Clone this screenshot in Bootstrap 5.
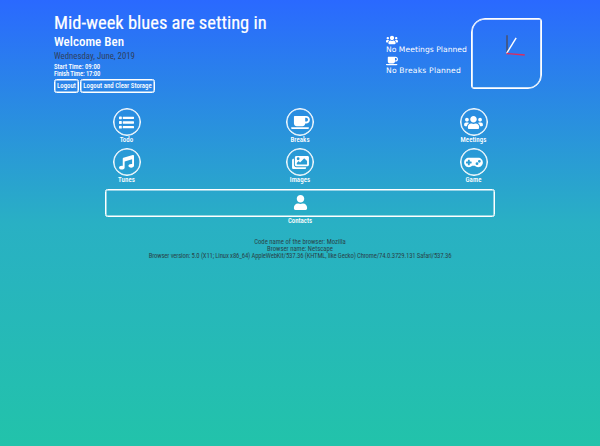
<!DOCTYPE html>
<html lang="en">
<head>
<meta charset="utf-8">
<meta name="viewport" content="width=device-width, initial-scale=1">
<title>Dashboard</title>
<link href="https://cdn.jsdelivr.net/npm/bootstrap@5.3.0/dist/css/bootstrap.min.css" rel="stylesheet">
<style>
body{height:446px;overflow:hidden;background:linear-gradient(180deg,#2a69ff 0%,#29b0c4 50%,#22c3aa 100%);font-family:"Roboto Condensed","Liberation Sans",sans-serif;color:#fff;font-size:6.7px;line-height:7px}
span{white-space:nowrap}
.top{padding:13px 54px 0;height:102px}
.top h1{font-size:18.5px;line-height:20px;font-weight:400;color:#fff;-webkit-text-stroke:.2px #fff}
.top h2{font-size:13px;line-height:18px;font-weight:500;color:#fff}
.day{font-size:8.8px;line-height:11px;color:#2f3f60;margin-bottom:2px}
.times{font-weight:500;font-size:6.7px;line-height:7px}
.finish{letter-spacing:-.16px}
.line-btn{border:1px solid #fff;box-shadow:inset 0 0 0 .5px #fff;border-radius:2.5px;padding:0;height:14px;font-size:6.8px;line-height:11px;color:#fff;font-weight:500;background:none}
.b1{width:25px}.b2{width:75px}
.btn-line{gap:1px;margin-top:1px}
.plans{font-family:"DejaVu Sans",sans-serif;width:81px;font-size:7.6px;line-height:10px;padding-top:22px;letter-spacing:.04px}
.plans svg{display:block;width:12px;height:10px}
.cup-row{margin-top:1px;letter-spacing:.21px}
.clock{width:71px;height:71px;border:1px solid #fff;box-shadow:inset 0 0 0 .8px #fff;border-radius:14px 3px 14px 3px;margin:5px 4px 0}
.clock svg{display:block;width:100%;height:100%;fill:none}
.apps{width:390px;margin:6px auto 0}
.app{width:43px;height:40.3px;font-weight:500;font-size:6.9px;line-height:9px;letter-spacing:.06px}
.ring{width:28px;height:28px;border:1px solid #fff;box-shadow:inset 0 0 0 .5px #fff;border-radius:50%}
.ring svg,.bar svg{width:19px;height:15px}
.bar{height:28px;border:1px solid #fff;box-shadow:inset 0 0 0 .5px #fff;border-radius:2.5px}
.contacts{font-weight:500;font-size:6.8px;line-height:8px}
.foot{padding-top:14px;color:#29444a;font-size:6.7px;line-height:7px}
.agent{letter-spacing:-.145px}
svg{fill:#fff}
</style>
<script src="https://cdn.jsdelivr.net/npm/bootstrap@5.3.0/dist/js/bootstrap.bundle.min.js"></script>
</head>
<body>
<svg class="d-none">
<symbol id="users" viewBox="0 0 640 512"><path d="M96 224c35 0 64-29 64-64s-29-64-64-64-64 29-64 64 29 64 64 64zm448 0c35 0 64-29 64-64s-29-64-64-64-64 29-64 64 29 64 64 64zm32 32h-64c-18 0-34 7-45 19 40 22 69 62 75 109h66c18 0 32-14 32-32v-32c0-35-29-64-64-64zm-256 0c62 0 112-50 112-112S382 32 320 32 208 82 208 144s50 112 112 112zm77 32h-8c-21 10-44 16-69 16s-48-6-69-16h-8c-64 0-115 52-115 115v29c0 27 21 48 48 48h288c27 0 48-21 48-48v-29c0-63-51-115-115-115zm-224-13c-11-12-27-19-45-19H64c-35 0-64 29-64 64v32c0 18 14 32 32 32h66c6-47 35-87 75-109z"/></symbol>
<symbol id="cup" viewBox="0 0 640 512"><path d="M192 384h192c53 0 96-43 96-96h32c71 0 128-57 128-128S583 32 512 32H120c-13 0-24 11-24 24v232c0 53 43 96 96 96zM512 96c35 0 64 29 64 64s-29 64-64 64h-32V96h32zm48 384H48c-48 0-61-64-36-64h584c25 0 11 64-36 64z" fill-rule="evenodd"/></symbol>
<symbol id="list" viewBox="0 0 512 512"><path d="M16 48h64q16 0 16 16v64q0 16-16 16H16q-16 0-16-16V64q0-16 16-16zm0 160h64q16 0 16 16v64q0 16-16 16H16q-16 0-16-16v-64q0-16 16-16zm0 160h64q16 0 16 16v64q0 16-16 16H16q-16 0-16-16v-64q0-16 16-16zM144 56h352q16 0 16 16v48q0 16-16 16H144q-16 0-16-16V72q0-16 16-16zm0 160h352q16 0 16 16v48q0 16-16 16H144q-16 0-16-16v-48q0-16 16-16zm0 160h352q16 0 16 16v48q0 16-16 16H144q-16 0-16-16v-48q0-16 16-16z"/></symbol>
<symbol id="music" viewBox="0 0 512 512"><path d="M512 32v336c0 35-43 64-96 64s-96-29-96-64 43-64 96-64c11 0 22 1 32 4V148l-256 75v209c0 35-43 64-96 64S0 467 0 432s43-64 96-64c11 0 22 1 32 4V129c0-14 9-26 23-31L471 2c20-7 41 8 41 30z"/></symbol>
<symbol id="images" viewBox="0 0 576 512"><path fill-rule="evenodd" d="M480 416v16c0 27-21 48-48 48H48c-27 0-48-21-48-48V176c0-27 21-48 48-48h16v208c0 44 36 80 80 80h336zm96-80V80c0-27-21-48-48-48H144c-27 0-48 21-48 48v256c0 27 21 48 48 48h384c27 0 48-21 48-48zM256 128a48 48 0 1 1-96 0 48 48 0 0 1 96 0zm-96 144 55-55c5-5 12-5 17 0l40 39 135-135c5-5 12-5 17 0l88 87v112H160v-48z"/></symbol>
<symbol id="game" viewBox="0 0 640 512"><path fill-rule="evenodd" d="M480 96H160C72 96 0 168 0 256s72 160 160 160c45 0 86-19 115-49h90c29 30 70 49 115 49 88 0 160-72 160-160S568 96 480 96zM256 276q0 12-12 12h-52v52q0 12-12 12h-40q-12 0-12-12v-52H76q-12 0-12-12v-40q0-12 12-12h52v-52q0-12 12-12h40q12 0 12 12v52h52q12 0 12 12zm184 68a48 48 0 1 1 0-96 48 48 0 0 1 0 96zm80-80a48 48 0 1 1 0-96 48 48 0 0 1 0 96z"/></symbol>
<symbol id="user" viewBox="0 0 448 512"><path d="M224 256c71 0 128-57 128-128S295 0 224 0 96 57 96 128s57 128 128 128zm90 32h-17a174 174 0 0 1-146 0h-17C60 288 0 348 0 422v42c0 27 21 48 48 48h352c27 0 48-21 48-48v-42c0-74-60-134-134-134z"/></symbol>
</svg>
<header class="top d-flex">
  <div class="flex-grow-1">
    <h1 class="mb-0"><span>Mid-week blues are setting in</span></h1>
    <h2 class="mb-0"><span>Welcome Ben</span></h2>
    <div class="day"><span>Wednesday, June, 2019</span></div>
    <div class="times"><span>Start Time: 09:00</span></div>
    <div class="times finish"><span>Finish Time: 17:00</span></div>
    <div class="d-flex btn-line"><button class="line-btn b1"><span>Logout</span></button><button class="line-btn b2"><span>Logout and Clear Storage</span></button></div>
  </div>
  <div class="plans">
    <svg><use href="#users"/></svg>
    <div><span>No Meetings Planned</span></div>
    <div class="cup-row"><svg><use href="#cup"/></svg><span>No Breaks Planned</span></div>
  </div>
  <div class="clock"><svg viewBox="0 0 68 68"><path d="M34.500 34V16" stroke="#4a4f66" stroke-width="1.4"/><path d="M34 34L43.500 18.500" stroke="#fff" stroke-width="1.4"/><path d="M34 34L52 35.500" stroke="#dd2c5e" stroke-width="1.4"/></svg></div>
</header>
<main class="apps">
  <div class="d-flex justify-content-between">
    <div class="app d-flex flex-column align-items-center"><div class="ring d-flex align-items-center justify-content-center"><svg><use href="#list"/></svg></div><span>Todo</span></div>
    <div class="app d-flex flex-column align-items-center"><div class="ring d-flex align-items-center justify-content-center"><svg><use href="#cup"/></svg></div><span>Breaks</span></div>
    <div class="app d-flex flex-column align-items-center"><div class="ring d-flex align-items-center justify-content-center"><svg><use href="#users"/></svg></div><span>Meetings</span></div>
  </div>
  <div class="d-flex justify-content-between">
    <div class="app d-flex flex-column align-items-center"><div class="ring d-flex align-items-center justify-content-center"><svg><use href="#music"/></svg></div><span>Tunes</span></div>
    <div class="app d-flex flex-column align-items-center"><div class="ring d-flex align-items-center justify-content-center"><svg><use href="#images"/></svg></div><span>Images</span></div>
    <div class="app d-flex flex-column align-items-center"><div class="ring d-flex align-items-center justify-content-center"><svg><use href="#game"/></svg></div><span>Game</span></div>
  </div>
  <div class="bar d-flex align-items-center justify-content-center"><svg><use href="#user"/></svg></div>
  <div class="contacts text-center"><span>Contacts</span></div>
</main>
<footer class="foot text-center">
  <div><span>Code name of the browser: Mozilla</span></div>
  <div><span>Browser name: Netscape</span></div>
  <div class="agent"><span>Browser version: 5.0 (X11; Linux x86_64) AppleWebKit/537.36 (KHTML, like Gecko) Chrome/74.0.3729.131 Safari/537.36</span></div>
</footer>
</body>
</html>
